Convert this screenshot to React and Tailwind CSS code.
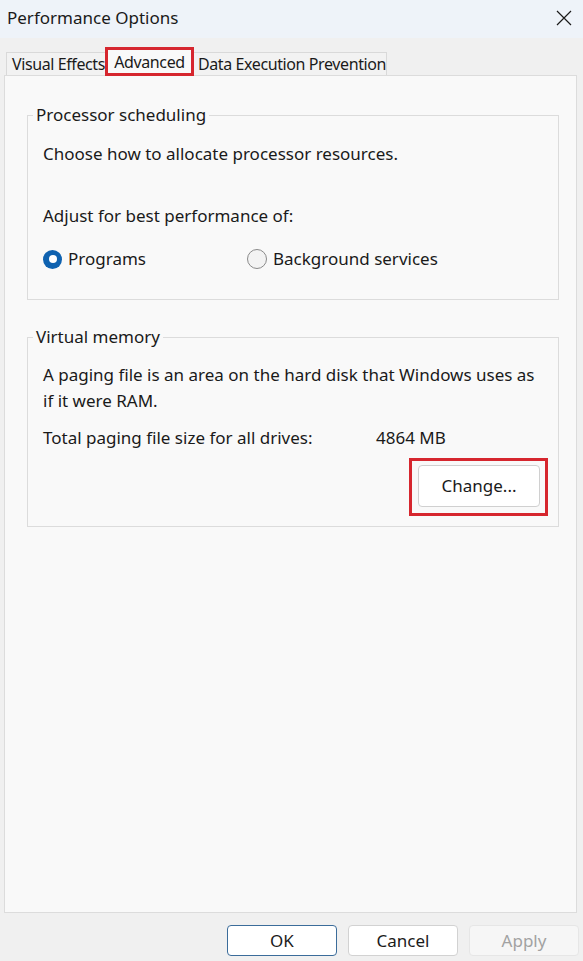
import React from "react";

const font = { fontFamily: '"Noto Sans", "Open Sans", sans-serif' };

const Radio = ({ checked, label, className = "" }) => (
  <label className={`flex items-center gap-[6px] ${className}`}>
    {checked ? (
      <span className="w-[19px] h-[19px] rounded-full bg-[#0f62b0] flex items-center justify-center">
        <span className="w-[8px] h-[8px] rounded-full bg-white" />
      </span>
    ) : (
      <span className="w-[20px] h-[20px] rounded-full border border-[#8a8a8a] bg-[#f3f3f3]" />
    )}
    <span>{label}</span>
  </label>
);

const GroupBox = ({ title, className = "", children }) => (
  <fieldset className={`border border-[#dcdcdc] p-0 m-0 ${className}`}>
    <legend className="ml-[5px] px-[3px] leading-[24px]">{title}</legend>
    {children}
  </fieldset>
);

const DialogButton = ({ children, variant = "default" }) => {
  const styles = {
    primary: "bg-white border-[#3b6c9a] text-[#1b1b1b]",
    default: "bg-white border-[#d2d2d2] text-[#1b1b1b]",
    disabled: "bg-[#f6f6f6] border-[#e6e6e6] text-[#a2a2a2]",
  };
  return (
    <button
      className={`w-[110px] h-[31px] rounded-[4px] border text-[17px] leading-none ${styles[variant]}`}
    >
      {children}
    </button>
  );
};

export default function App() {
  return (
    <div
      className="w-[583px] h-[961px] bg-[#f0f0f0] flex flex-col text-[17px] text-[#1a1a1a] overflow-hidden"
      style={font}
    >
      {/* Title bar */}
      <div className="h-[38px] bg-[#eef3f9] flex items-center justify-between pl-[7px] pr-[11px] pb-[3px] shrink-0">
        <span className="text-[17px]">Performance Options</span>
        <svg width="16" height="16" viewBox="0 0 16 16" className="text-[#1a1a1a]">
          <path d="M1 1 L15 15 M15 1 L1 15" stroke="currentColor" strokeWidth="1.2" fill="none" />
        </svg>
      </div>

      {/* Tabs */}
      <div className="mt-[9px] h-[28px] flex items-end pl-[6px] shrink-0">
        <div className="h-[23px] w-[99px] border-l border-t border-[#d9d9d9] bg-[#f2f2f2] flex items-center pl-[5px] text-[16px] tracking-[-0.4px] whitespace-nowrap">
          Visual Effects
        </div>
        <div className="relative z-10 -mb-px h-[29px] w-[89px] border-[3px] border-[#d6262e] bg-[#f9f9f9] flex items-center justify-center text-[16px] tracking-[-0.4px]">
          Advanced
        </div>
        <div className="h-[23px] w-[193px] border-r border-t border-[#d9d9d9] bg-[#f2f2f2] flex items-center pl-[4px] text-[16px] tracking-[-0.4px] whitespace-nowrap">
          Data Execution Prevention
        </div>
      </div>

      {/* Panel */}
      <div className="ml-[4px] w-[573px] h-[838px] border border-[#dcdcdc] bg-[#f9f9f9] pt-[27px] pl-[22px] pr-[17px] shrink-0">
        <GroupBox title="Processor scheduling">
          <div className="px-[15px] pt-[15px] pb-[28px]">
            <p className="leading-[24px]">Choose how to allocate processor resources.</p>
            <p className="leading-[24px] mt-[38px]">Adjust for best performance of:</p>
            <div className="flex items-center mt-[19px] h-[24px]">
              <Radio checked label="Programs" className="w-[204px]" />
              <Radio label="Background services" />
            </div>
          </div>
        </GroupBox>

        <GroupBox title="Virtual memory" className="mt-[25px]">
          <div className="px-[15px] pt-[13px] pb-[10px]">
            <p className="leading-[26px] whitespace-nowrap">
              A paging file is an area on the hard disk that Windows uses as
              <br />
              if it were RAM.
            </p>
            <div className="flex mt-[12px] leading-[24px]">
              <span className="w-[333px]">Total paging file size for all drives:</span>
              <span>4864 MB</span>
            </div>
            <div className="flex justify-end mt-[8px] -mr-[5px]">
              <div className="border-[3px] border-[#d6262e] pl-[6px] pr-[5px] pt-[4px] pb-[6px]">
                <button className="w-[122px] h-[42px] rounded-[4px] border border-[#d0d0d0] bg-white text-[17px]">
                  Change...
                </button>
              </div>
            </div>
          </div>
        </GroupBox>
      </div>

      {/* Footer buttons */}
      <div className="mt-[12px] flex justify-end gap-[11px] pr-[4px] shrink-0">
        <DialogButton variant="primary">OK</DialogButton>
        <DialogButton>Cancel</DialogButton>
        <DialogButton variant="disabled">Apply</DialogButton>
      </div>
    </div>
  );
}
